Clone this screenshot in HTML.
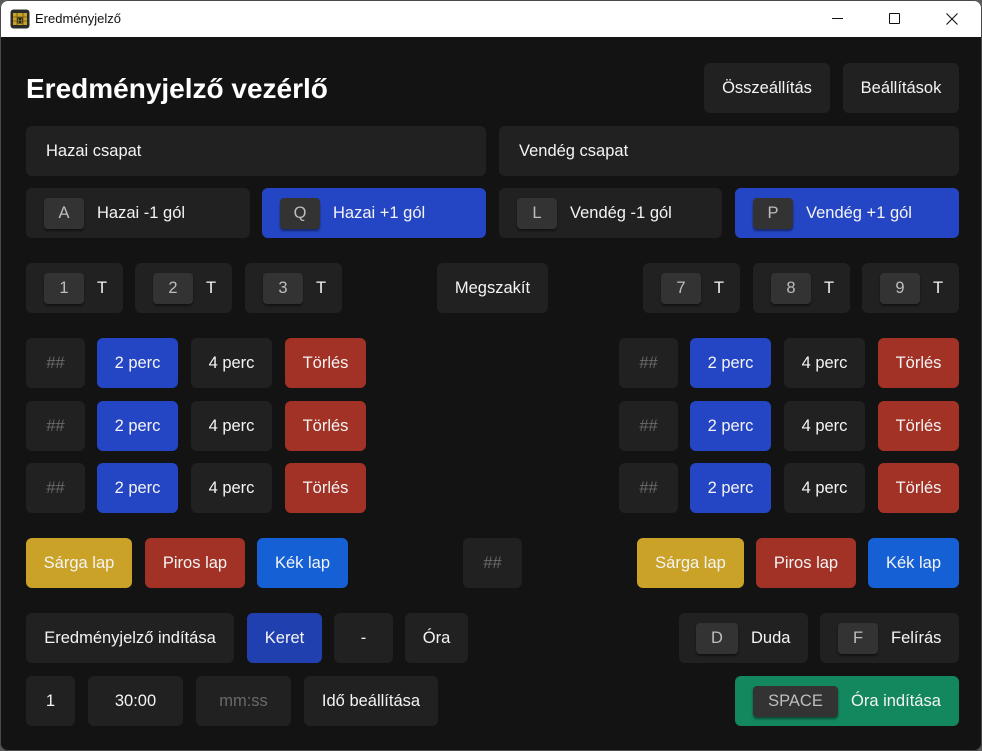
<!DOCTYPE html>
<html><head><meta charset="utf-8"><style>
*{box-sizing:border-box;margin:0;padding:0}
html,body{width:982px;height:751px;overflow:hidden;background:#5a5a5a}
body{font-family:"Liberation Sans",Arial,sans-serif;color:#f2f2f2;position:relative}
#win{position:absolute;left:0;top:0;width:982px;height:751px;background:#131313;border-radius:8px;overflow:hidden}
#bd{position:absolute;left:0;top:0;width:982px;height:751px;border:1px solid #4a4a4a;border-radius:8px;pointer-events:none}
#tb{position:absolute;left:0;top:0;width:982px;height:37px;background:#fff;color:#111;font-size:13px}
.b{position:absolute;background:#212121;border-radius:6px;display:flex;align-items:center;justify-content:center;font-size:16.5px;color:#f4f4f4;height:50px;padding-top:1px}
.k{justify-content:flex-start;padding-left:18px}
.cap{background:#333;border-radius:4px;height:31px;width:40px;display:flex;align-items:center;justify-content:center;color:#bdbdbd;box-shadow:0 2px 2px rgba(0,0,0,.45);margin-right:13px;flex:none}
.blue{background:#2546c4}.red{background:#a33226}.ph{color:#6a6a6a}
</style></head><body>
<div id="win">
<div id="tb">
 <svg style="position:absolute;left:10px;top:9px" width="20" height="20" viewBox="0 0 20 20"><rect x="0.5" y="0.5" width="19" height="19" rx="3" fill="#2b2b2b"/><rect x="3" y="4" width="14" height="12" fill="#c9a227"/><path d="M3 8h14M3 12h14M7 4v12M13 4v12" stroke="#6b5410" stroke-width="0.8"/><rect x="7.5" y="8.5" width="5" height="6" fill="#222"/><text x="10" y="14" font-size="6" fill="#c9a227" text-anchor="middle" font-family="Liberation Sans">H</text></svg>
 <div style="position:absolute;left:35px;top:11px">Eredményjelző</div>
 <div style="position:absolute;left:832px;top:18px;width:11px;height:1px;background:#111"></div>
 <div style="position:absolute;left:889px;top:13px;width:11px;height:11px;border:1px solid #111;border-radius:1px"></div>
 <svg style="position:absolute;left:946px;top:13px" width="12" height="12"><path d="M0.5 0.5L11.5 11.5M11.5 0.5L0.5 11.5" stroke="#111" stroke-width="1.1"/></svg>
</div>
<div style="position:absolute;left:26px;top:73px;font-size:28px;font-weight:bold;color:#fff">Eredményjelző vezérlő</div>
<div class="b" style="left:704px;top:63px;width:126px">Összeállítás</div>
<div class="b" style="left:843px;top:63px;width:116px">Beállítások</div>
<div class="b" style="left:26px;top:126px;width:460px;justify-content:flex-start;padding-left:20px">Hazai csapat</div>
<div class="b" style="left:499px;top:126px;width:460px;justify-content:flex-start;padding-left:20px">Vendég csapat</div>
<div class="b k" style="left:26px;top:188px;width:224px"><span class="cap">A</span>Hazai -1 gól</div>
<div class="b k blue" style="left:262px;top:188px;width:224px"><span class="cap">Q</span>Hazai +1 gól</div>
<div class="b k" style="left:499px;top:188px;width:223px"><span class="cap">L</span>Vendég -1 gól</div>
<div class="b k blue" style="left:735px;top:188px;width:224px"><span class="cap">P</span>Vendég +1 gól</div>

<div class="b k" style="left:26px;top:263px;width:97px"><span class="cap">1</span>T</div>
<div class="b k" style="left:135px;top:263px;width:97px"><span class="cap">2</span>T</div>
<div class="b k" style="left:245px;top:263px;width:97px"><span class="cap">3</span>T</div>
<div class="b" style="left:437px;top:263px;width:111px">Megszakít</div>
<div class="b k" style="left:643px;top:263px;width:97px"><span class="cap">7</span>T</div>
<div class="b k" style="left:753px;top:263px;width:97px"><span class="cap">8</span>T</div>
<div class="b k" style="left:862px;top:263px;width:97px"><span class="cap">9</span>T</div>

<div class="b ph" style="left:26px;top:338px;width:59px">##</div><div class="b blue" style="left:97px;top:338px;width:81px">2 perc</div><div class="b" style="left:191px;top:338px;width:81px">4 perc</div><div class="b red" style="left:285px;top:338px;width:81px">Törlés</div>
<div class="b ph" style="left:26px;top:401px;width:59px">##</div><div class="b blue" style="left:97px;top:401px;width:81px">2 perc</div><div class="b" style="left:191px;top:401px;width:81px">4 perc</div><div class="b red" style="left:285px;top:401px;width:81px">Törlés</div>
<div class="b ph" style="left:26px;top:463px;width:59px">##</div><div class="b blue" style="left:97px;top:463px;width:81px">2 perc</div><div class="b" style="left:191px;top:463px;width:81px">4 perc</div><div class="b red" style="left:285px;top:463px;width:81px">Törlés</div>
<div class="b ph" style="left:619px;top:338px;width:59px">##</div><div class="b blue" style="left:690px;top:338px;width:81px">2 perc</div><div class="b" style="left:784px;top:338px;width:81px">4 perc</div><div class="b red" style="left:878px;top:338px;width:81px">Törlés</div>
<div class="b ph" style="left:619px;top:401px;width:59px">##</div><div class="b blue" style="left:690px;top:401px;width:81px">2 perc</div><div class="b" style="left:784px;top:401px;width:81px">4 perc</div><div class="b red" style="left:878px;top:401px;width:81px">Törlés</div>
<div class="b ph" style="left:619px;top:463px;width:59px">##</div><div class="b blue" style="left:690px;top:463px;width:81px">2 perc</div><div class="b" style="left:784px;top:463px;width:81px">4 perc</div><div class="b red" style="left:878px;top:463px;width:81px">Törlés</div>

<div class="b" style="left:26px;top:538px;width:106px;background:#c9a227">Sárga lap</div>
<div class="b red" style="left:145px;top:538px;width:100px">Piros lap</div>
<div class="b" style="left:257px;top:538px;width:91px;background:#1560d4">Kék lap</div>
<div class="b ph" style="left:463px;top:538px;width:59px">##</div>
<div class="b" style="left:637px;top:538px;width:107px;background:#c9a227">Sárga lap</div>
<div class="b red" style="left:756px;top:538px;width:100px">Piros lap</div>
<div class="b" style="left:868px;top:538px;width:91px;background:#1560d4">Kék lap</div>

<div class="b" style="left:26px;top:613px;width:208px">Eredményjelző indítása</div>
<div class="b" style="left:247px;top:613px;width:75px;background:#2140b0">Keret</div>
<div class="b" style="left:334px;top:613px;width:59px">-</div>
<div class="b" style="left:405px;top:613px;width:63px">Óra</div>
<div class="b k" style="left:679px;top:613px;width:129px;padding-left:17px"><span class="cap" style="width:42px">D</span>Duda</div>
<div class="b k" style="left:820px;top:613px;width:139px;padding-left:18px"><span class="cap">F</span>Felírás</div>

<div class="b" style="left:26px;top:676px;width:49px">1</div>
<div class="b" style="left:88px;top:676px;width:95px">30:00</div>
<div class="b ph" style="left:196px;top:676px;width:95px">mm:ss</div>
<div class="b" style="left:304px;top:676px;width:134px">Idő beállítása</div>
<div class="b k" style="left:735px;top:676px;width:224px;background:#13875e"><span class="cap" style="width:85px">SPACE</span>Óra indítása</div>
</div>
<div id="bd"></div>
</body></html>
